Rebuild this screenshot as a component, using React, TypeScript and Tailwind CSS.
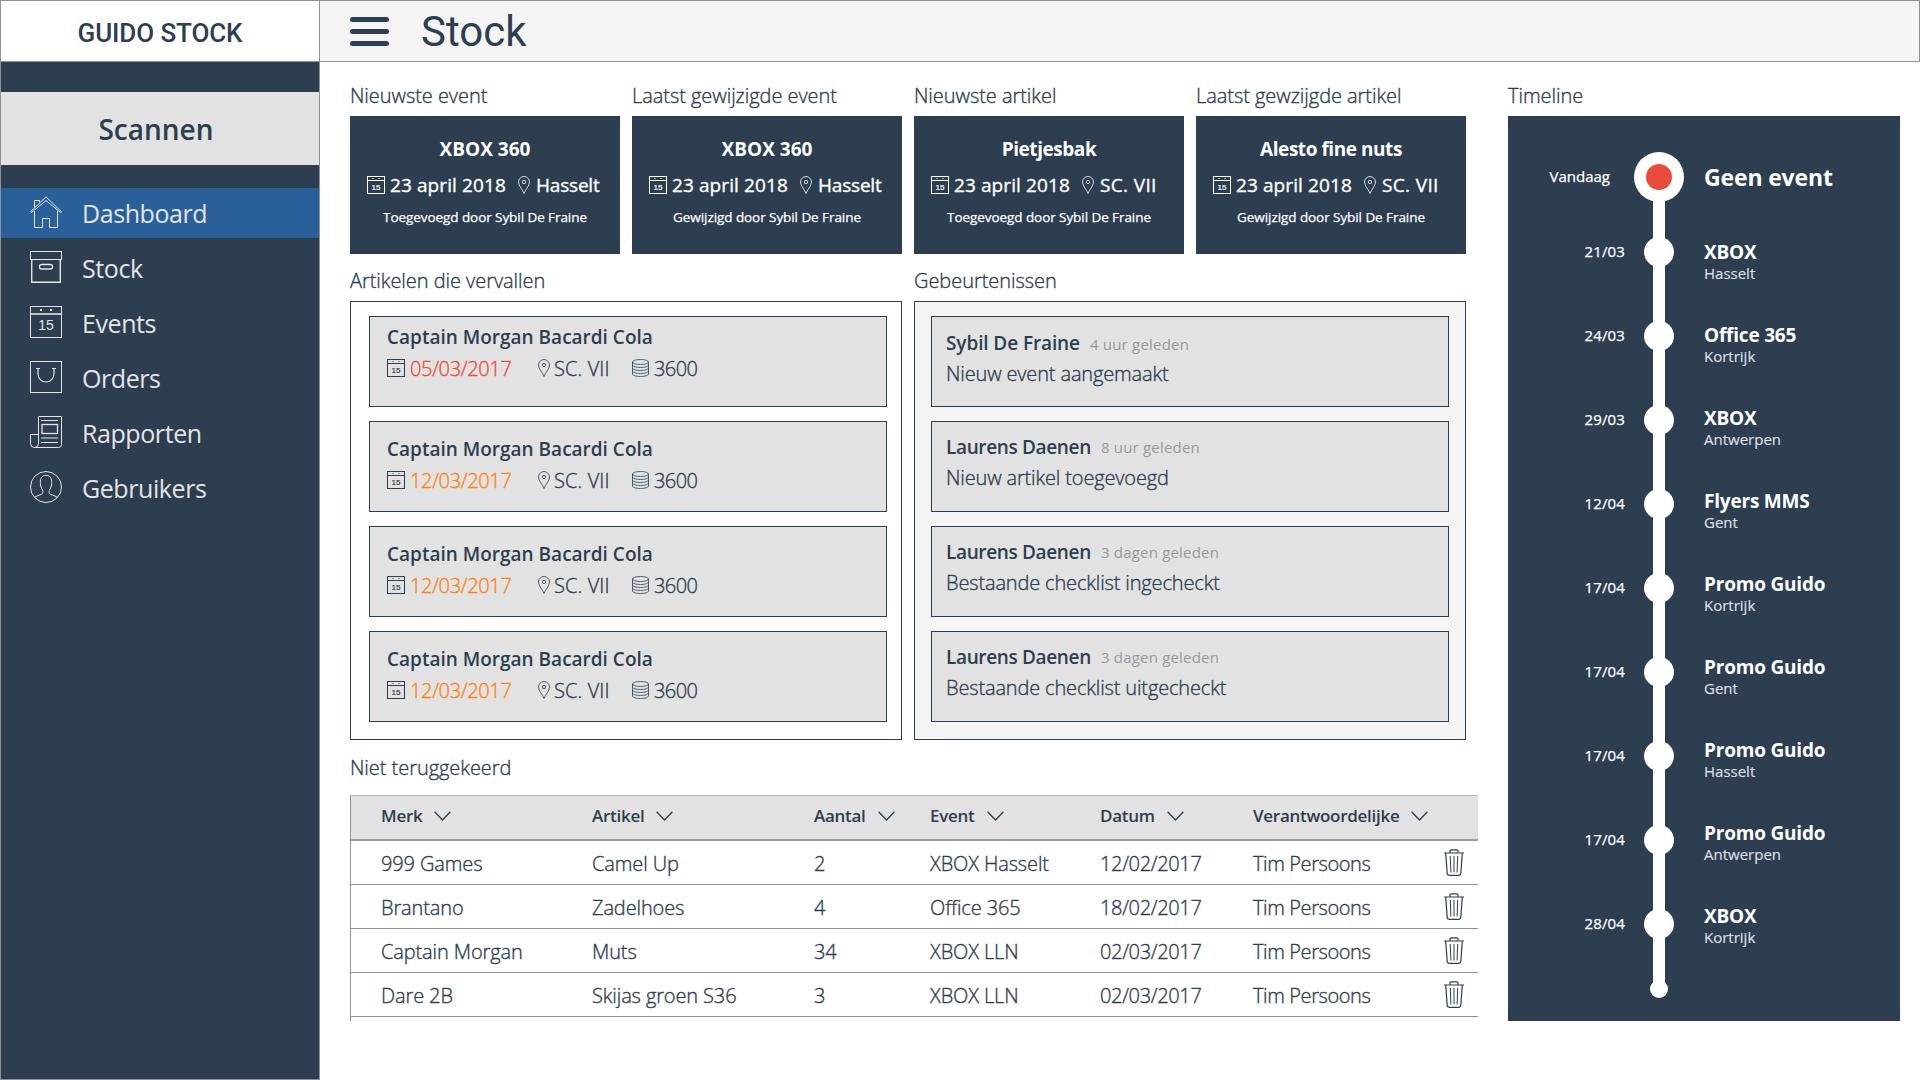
import React from 'react';

type IconProps = { className?: string };

const stroke = { fill: 'none', stroke: 'currentColor', strokeWidth: 1 } as const;

const HouseIcon = () => (
  <svg width="32" height="32" viewBox="0 0 32 32" {...stroke}>
    <path d="M.5 15.8 16 .8l15.500 15-.9.8L16 4.500 1.400 16.600z" />
    <path d="M4.500 11.500V4.500h5v2M4.500 15v16.500h8V22.500h7v9h8V15" />
  </svg>
);

const BoxIcon = () => (
  <svg width="32" height="32" viewBox="0 0 32 32" {...stroke}>
    <rect x=".5" y=".5" width="31" height="8" />
    <path d="M1.700 8.500v22.800h28.600V8.500" strokeWidth="1.400" />
    <rect x="9.500" y="13.500" width="13" height="4.500" rx="2" strokeWidth="1.300" />
  </svg>
);

const CalendarIcon = () => (
  <svg width="32" height="32" viewBox="0 0 32 32" {...stroke}>
    <rect x=".5" y=".5" width="31" height="31" />
    <path d="M0 8h32" strokeWidth="1.600" />
    <path d="M10 4h2M20 4h2" strokeWidth="2" />
    <text x="16" y="23.500" textAnchor="middle" fontSize="14" fontFamily="Liberation Sans, sans-serif" fill="currentColor" stroke="none">15</text>
  </svg>
);

const BagIcon = () => (
  <svg width="32" height="32" viewBox="0 0 32 32" {...stroke}>
    <rect x=".5" y=".5" width="31" height="31" />
    <path d="M6 7.500h4M22 7.500h4M8 7.500V13a8 8 0 0 0 16 0V7.500" strokeWidth="1.200" />
  </svg>
);

const NewsIcon = () => (
  <svg width="32" height="32" viewBox="0 0 32 32" {...stroke}>
    <path d="M8.500 27.500V.5h23v28a3 3 0 0 1-3 3H4.500a4 4 0 0 1-4-4v-9h8v9a4 4 0 0 1-4 4" />
    <path d="M11 4.500h17M11 22h17M11 26.500h17" />
    <rect x="12" y="8.500" width="15.500" height="9" strokeWidth="1.300" />
  </svg>
);

const UserIcon = () => (
  <svg width="32" height="32" viewBox="0 0 32 32" {...stroke}>
    <circle cx="16" cy="16" r="15.500" />
    <path d="M4.500 26.200c2-1.300 5-1.900 7.200-2.900 1.300-.6 1.300-2.300.9-4-.8-1.400-1.600-2.600-1.900-4.300-.6-3-.6-6 .5-8 .9-1.700 2.600-2.700 4.800-2.700s3.900 1 4.800 2.700c1.100 2 1.100 5 .5 8-.3 1.700-1.100 2.900-1.900 4.300-.4 1.700-.4 3.400.9 4 2.200 1 5.200 1.600 7.200 2.900" />
  </svg>
);

const SmallCalendarIcon = ({ className }: IconProps) => (
  <svg className={className} width="18" height="18" viewBox="0 0 18 18" {...stroke}>
    <rect x=".5" y=".5" width="17" height="17" />
    <path d="M0 4.500h18" />
    <path d="M5.500 2.500h1M11.500 2.500h1" />
    <text x="9" y="13.500" textAnchor="middle" fontSize="8" fontFamily="Liberation Sans, sans-serif" fill="currentColor" stroke="currentColor" strokeWidth=".2">15</text>
  </svg>
);

const PinIcon = ({ className }: IconProps) => (
  <svg className={className} width="12" height="18" viewBox="0 0 12 18" {...stroke} strokeWidth=".8">
    <path d="M6 17.500C5 14 .5 10 .5 6a5.500 5.500 0 0 1 11 0c0 4-4.500 8-5.500 11.500z" />
    <circle cx="6" cy="6" r="1.700" />
  </svg>
);

const CoinsIcon = ({ className }: IconProps) => (
  <svg className={className} width="17" height="18" viewBox="0 0 17 18" {...stroke} strokeWidth=".8">
    <ellipse cx="8.500" cy="3" rx="8" ry="2.500" />
    <path d="M.5 3v12c0 1.400 3.600 2.500 8 2.500s8-1.100 8-2.500V3" />
    <path d="M.5 6c0 1.400 3.600 2.500 8 2.500s8-1.100 8-2.500M.5 9c0 1.400 3.600 2.500 8 2.500s8-1.100 8-2.500M.5 12c0 1.400 3.600 2.500 8 2.500s8-1.100 8-2.500" />
  </svg>
);

const ChevronIcon = () => (
  <svg width="17" height="10" viewBox="0 0 17 10" fill="none" stroke="currentColor" strokeWidth="1.300">
    <path d="M.6.7 8.500 9 16.400.7" />
  </svg>
);

const TrashIcon = () => (
  <svg width="20" height="27" viewBox="0 0 20 27" fill="none" stroke="currentColor" strokeWidth="1.200">
    <path d="M0 4h20M6 4V1.800Q6 .8 7 .8h6q1 0 1 1V4M1.700 4l1.500 20.400q.1 1.900 2 1.900h9.600q1.900 0 2-1.900L18.300 4" />
    <path d="M6.300 7l.6 16.500M10 7v16.500M13.700 7l-.6 16.500" strokeWidth="1" />
  </svg>
);

const nav = [
  { label: 'Dashboard', Icon: HouseIcon, active: true },
  { label: 'Stock', Icon: BoxIcon },
  { label: 'Events', Icon: CalendarIcon },
  { label: 'Orders', Icon: BagIcon },
  { label: 'Rapporten', Icon: NewsIcon },
  { label: 'Gebruikers', Icon: UserIcon },
];

const highlights = [
  { heading: 'Nieuwste event', title: 'XBOX 360', place: 'Hasselt', by: 'Toegevoegd door Sybil De Fraine' },
  { heading: 'Laatst gewijzigde event', title: 'XBOX 360', place: 'Hasselt', by: 'Gewijzigd door Sybil De Fraine' },
  { heading: 'Nieuwste artikel', title: 'Pietjesbak', place: 'SC. VII', by: 'Toegevoegd door Sybil De Fraine' },
  { heading: 'Laatst gewzijgde artikel', title: 'Alesto fine nuts', place: 'SC. VII', by: 'Gewijzigd door Sybil De Fraine' },
];

const expiring = [
  { date: '05/03/2017', urgent: true },
  { date: '12/03/2017', urgent: false },
  { date: '12/03/2017', urgent: false },
  { date: '12/03/2017', urgent: false },
];

const activity = [
  { who: 'Sybil De Fraine', when: '4 uur geleden', what: 'Nieuw event aangemaakt' },
  { who: 'Laurens Daenen', when: '8 uur geleden', what: 'Nieuw artikel toegevoegd' },
  { who: 'Laurens Daenen', when: '3 dagen geleden', what: 'Bestaande checklist ingecheckt' },
  { who: 'Laurens Daenen', when: '3 dagen geleden', what: 'Bestaande checklist uitgecheckt' },
];

const columns = ['Merk', 'Artikel', 'Aantal', 'Event', 'Datum', 'Verantwoordelijke'];

const rows = [
  ['999 Games', 'Camel Up', '2', 'XBOX Hasselt', '12/02/2017', 'Tim Persoons'],
  ['Brantano', 'Zadelhoes', '4', 'Office 365', '18/02/2017', 'Tim Persoons'],
  ['Captain Morgan', 'Muts', '34', 'XBOX LLN', '02/03/2017', 'Tim Persoons'],
  ['Dare 2B', 'Skijas groen S36', '3', 'XBOX LLN', '02/03/2017', 'Tim Persoons'],
];

const timeline = [
  { date: '21/03', name: 'XBOX', place: 'Hasselt' },
  { date: '24/03', name: 'Office 365', place: 'Kortrijk' },
  { date: '29/03', name: 'XBOX', place: 'Antwerpen' },
  { date: '12/04', name: 'Flyers MMS', place: 'Gent' },
  { date: '17/04', name: 'Promo Guido', place: 'Kortrijk' },
  { date: '17/04', name: 'Promo Guido', place: 'Gent' },
  { date: '17/04', name: 'Promo Guido', place: 'Hasselt' },
  { date: '17/04', name: 'Promo Guido', place: 'Antwerpen' },
  { date: '28/04', name: 'XBOX', place: 'Kortrijk' },
];

const light = 'text-[20px] leading-7 font-light [-webkit-text-stroke:0.35px]';
const tableGrid = 'grid grid-cols-[211px_222px_116px_170px_153px_191px_1fr] pl-[30px]';

function SectionLabel({ children }: { children: React.ReactNode }) {
  return <h2 className={`${light} h-7 pt-px tracking-[-0.05px] whitespace-nowrap`}>{children}</h2>;
}

function Sidebar() {
  return (
    <aside className="flex w-[320px] shrink-0 flex-col border-x border-b border-[#8f9396] bg-[#2d3e50]">
      <div className="flex h-[62px] items-center justify-center border-y border-[#8f9396] bg-white font-['Roboto',sans-serif] text-[26px] font-medium tracking-[-0.1px]">
        <span className="pt-1">GUIDO STOCK</span>
      </div>
      <button className="mt-[30px] flex h-[73px] w-full items-center justify-center bg-[#e2e2e2] pr-2 text-[28px] font-semibold">
        Scannen
      </button>
      <nav className="mt-[23px] flex flex-col gap-[5px] text-[#e4e4e4]">
        {nav.map(({ label, Icon, active }) => (
          <a key={label} className={`flex h-[50px] items-center pl-[29px] ${active ? 'bg-[#2a6099]' : ''}`}>
            <span className="-mt-0.5">
              <Icon />
            </span>
            <span className="ml-5 text-[25px] leading-[34px] tracking-[-0.42px]">{label}</span>
          </a>
        ))}
      </nav>
    </aside>
  );
}

function HighlightCard({ item }: { item: (typeof highlights)[number] }) {
  return (
    <section className="w-[270px]">
      <SectionLabel>{item.heading}</SectionLabel>
      <div className="mt-[7px] h-[138px] bg-[#2d3e50] pt-[19px] text-white">
        <h3 className={`text-center text-[19px] leading-7 font-bold ${item.title.startsWith('XBOX') ? 'tracking-[0px]' : 'tracking-[-0.45px]'}`}>{item.title}</h3>
        <div className="mt-2 flex h-7 items-center pl-[17px] text-[19px] leading-7 font-medium">
          <SmallCalendarIcon />
          <span className="ml-[5px] w-[128px] tracking-[0.1px] [-webkit-text-stroke:0.35px]">23 april 2018</span>
          <PinIcon />
          <span className={`ml-1.5 [-webkit-text-stroke:0.35px] ${item.place === 'Hasselt' ? 'tracking-[-0.2px]' : 'tracking-[0.35px]'}`}>{item.place}</span>
        </div>
        <p className="mt-2 text-center text-[13.5px] leading-5 tracking-[-0.07px] [-webkit-text-stroke:0.25px]">{item.by}</p>
      </div>
    </section>
  );
}

function ExpiringPanel() {
  return (
    <section className="w-[552px]">
      <SectionLabel>Artikelen die vervallen</SectionLabel>
      <div className="mt-[7px] flex h-[439px] flex-col gap-3.5 border border-[#2d3e50] pt-3.5 pr-3.5 pl-[18px]">
        {expiring.map((item, i) => (
          <article key={i} className={`h-[91px] border border-[#2d3e50] bg-[#e2e2e2] pl-[17px] ${i === 0 ? 'pt-1.5' : 'pt-[13px]'}`}>
            <h3 className="text-[19px] leading-7 font-semibold">Captain Morgan Bacardi Cola</h3>
            <div className={`${light} mt-[3px] flex h-7 items-center`}>
              <SmallCalendarIcon />
              <span className={`ml-[5px] w-[128px] pt-px tracking-[-0.35px] ${item.urgent ? 'text-[#e74c3c]' : 'text-[#fb8315]'}`}>{item.date}</span>
              <PinIcon />
              <span className="ml-1 w-[78px] pt-px tracking-[0.1px]">SC. VII</span>
              <CoinsIcon />
              <span className="ml-[5px] pt-px tracking-[-0.6px]">3600</span>
            </div>
          </article>
        ))}
      </div>
    </section>
  );
}

function ActivityPanel() {
  return (
    <section className="w-[552px]">
      <SectionLabel>Gebeurtenissen</SectionLabel>
      <div className="mt-[7px] flex h-[439px] flex-col gap-3.5 border border-[#2d3e50] bg-[#f4f4f4] px-4 pt-3.5">
        {activity.map((item, i) => (
          <article key={i} className={`h-[91px] border border-[#2d3e50] bg-[#e2e2e2] pl-3.5 ${i === 0 ? 'pt-3' : 'pt-[11px]'}`}>
            <div className="flex h-7 items-start">
              <h3 className={`text-[19px] leading-7 font-semibold ${i === 0 ? 'tracking-[-0.1px]' : 'tracking-[-0.35px]'}`}>{item.who}</h3>
              <span className={`ml-2.5 text-[15px] leading-5 tracking-[0.2px] text-[#96999c] ${i === 0 ? 'pt-[5px]' : 'pt-1'}`}>{item.when}</span>
            </div>
            <p className={`${light} pt-[3px] tracking-[-0.15px]`}>{item.what}</p>
          </article>
        ))}
      </div>
    </section>
  );
}

function ReturnsTable() {
  return (
    <section className="mt-[13px]">
      <SectionLabel>Niet teruggekeerd</SectionLabel>
      <div className="mt-3.5 w-[1128px] border-l border-[#8f9396]">
        <div className={`${tableGrid} h-[46px] items-center border-t border-b-2 border-t-[#b9babb] border-b-[#9b9ea0] bg-[#e2e2e2] pb-[3px]`}>
          {columns.map((name) => (
            <div key={name} className="flex items-center gap-3 text-[17px] leading-6 font-semibold tracking-[-0.28px]">
              {name}
              <ChevronIcon />
            </div>
          ))}
        </div>
        {rows.map((row, i) => (
          <div key={i} className={`${tableGrid} h-11 items-center border-b border-[#8f9396]`}>
            {row.map((cell, j) => (
              <span key={j} className={`${light} pt-0.5 whitespace-nowrap ${j === 4 ? 'tracking-[-0.35px]' : j === 5 ? 'tracking-[-0.4px]' : 'tracking-[-0.12px]'}`}>
                {cell}
              </span>
            ))}
            <TrashIcon />
          </div>
        ))}
        <div className="h-1" />
      </div>
    </section>
  );
}

function Timeline() {
  return (
    <section className="ml-[30px] w-[392px]">
      <SectionLabel>Timeline</SectionLabel>
      <div className="mt-[7px] flex h-[905px] bg-[#2d3e50] text-white">
        <div className="w-[117px] pt-[50px] text-right text-[15px] leading-5 font-medium [-webkit-text-stroke:0.25px]">
          <p className="h-[75px] pr-[15px]">Vandaag</p>
          {timeline.map((e, i) => (
            <p key={i} className="h-[84px] tracking-[0.15px]">{e.date}</p>
          ))}
        </div>
        <div className="relative ml-[9px] flex w-[50px] flex-col items-center pt-9">
          <div className="absolute top-[60px] left-[19px] h-[812px] w-3 bg-white" />
          <div className="relative flex size-[50px] shrink-0 items-center justify-center rounded-full bg-white">
            <div className="size-[26px] rounded-full bg-[#e74c3c]" />
          </div>
          <div className="mt-[35px] flex flex-col gap-[54px]">
            {timeline.map((_, i) => (
              <div key={i} className="size-[30px] rounded-full bg-white" />
            ))}
          </div>
          <div className="mt-[41px] size-[18px] rounded-full bg-white" />
        </div>
        <div className="ml-5 pt-[45px]">
          <h3 className="mb-[47px] text-[23px] leading-8 font-bold tracking-[-0.15px]">Geen event</h3>
          {timeline.map((e, i) => (
            <div key={i} className="h-[83px]">
              <h4 className="text-[19px] leading-6 font-bold tracking-[-0.2px]">{e.name}</h4>
              <p className="-mt-px text-[15px] leading-5 text-[#dcdfe1] [-webkit-text-stroke:0.2px]">{e.place}</p>
            </div>
          ))}
        </div>
      </div>
    </section>
  );
}

export default function App() {
  return (
    <div className="flex h-[1080px] w-[1920px] overflow-hidden bg-white font-['Open_Sans','Noto_Sans',sans-serif] text-[#2d3e50]">
      <Sidebar />
      <div className="flex flex-1 flex-col">
        <header className="flex h-[62px] items-center border-y border-r border-[#8f9396] bg-[#f4f4f4] pl-[30px]">
          <div className="flex w-[39px] flex-col gap-[7px]">
            <span className="h-[5px] rounded-full bg-current" />
            <span className="h-[5px] rounded-full bg-current" />
            <span className="h-[5px] rounded-full bg-current" />
          </div>
          <h1 className="ml-8 pt-0.5 font-['Roboto',sans-serif] text-[42px] leading-[58px]">Stock</h1>
        </header>
        <main className="flex pt-[19px] pl-[30px]">
          <div>
            <div className="flex gap-3">
              {highlights.map((item) => (
                <HighlightCard key={item.heading} item={item} />
              ))}
            </div>
            <div className="mt-3 flex gap-3">
              <ExpiringPanel />
              <ActivityPanel />
            </div>
            <ReturnsTable />
          </div>
          <Timeline />
        </main>
      </div>
    </div>
  );
}
